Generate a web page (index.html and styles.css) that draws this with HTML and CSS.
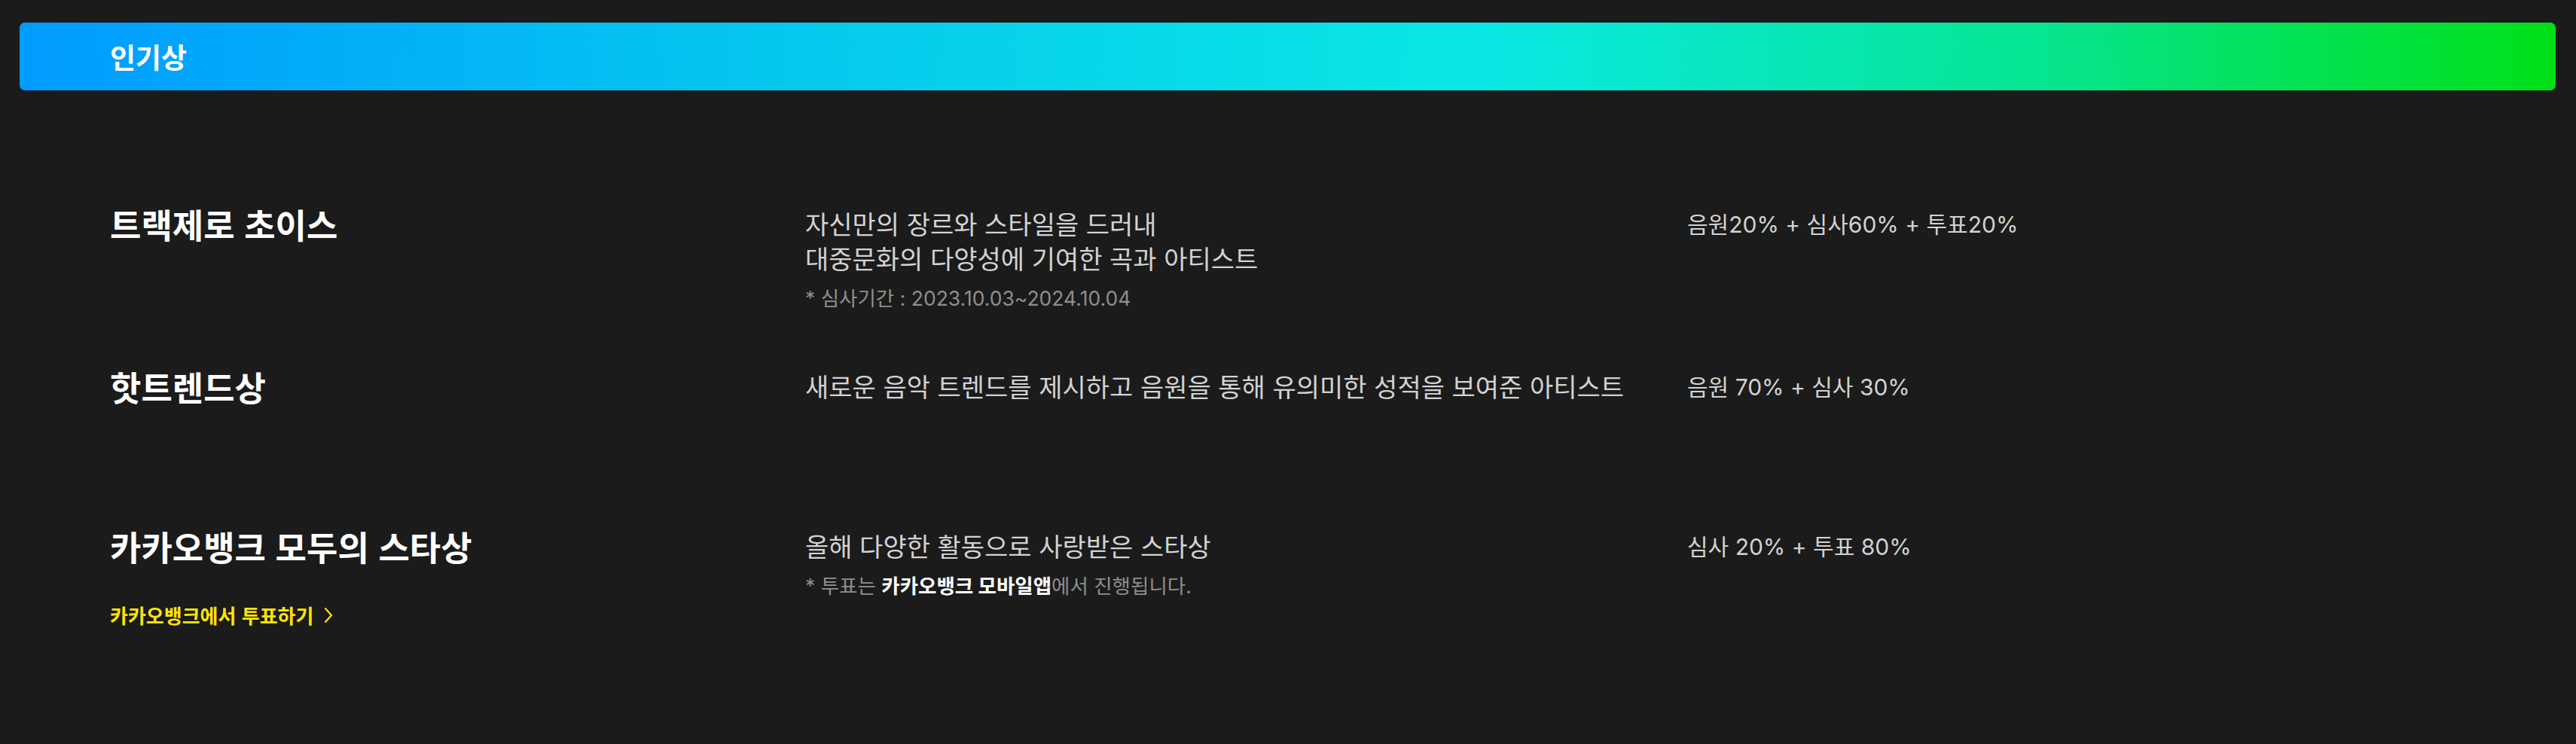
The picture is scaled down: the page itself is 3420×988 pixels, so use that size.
FILE: index.html
```html
<!DOCTYPE html>
<html lang="ko">
<head>
<meta charset="utf-8">
<title>인기상</title>
<link rel="stylesheet" href="styles.css">
</head>
<body>
<section class="award">
  <header class="award-banner">
    <h2 class="award-banner__title">인기상</h2>
  </header>
  <div class="award-list">
    <div class="award-row">
      <div class="award-name">
        <h3 class="award-name__title">트랙제로 초이스</h3>
      </div>
      <div class="award-desc">
        <p class="award-desc__text">자신만의 장르와 스타일을 드러내<br>대중문화의 다양성에 기여한 곡과 아티스트</p>
        <p class="award-desc__note">* 심사기간 : 2023.10.03~2024.10.04</p>
      </div>
      <div class="award-ratio">음원20% + 심사60% + 투표20%</div>
    </div>
    <div class="award-row">
      <div class="award-name">
        <h3 class="award-name__title">핫트렌드상</h3>
      </div>
      <div class="award-desc">
        <p class="award-desc__text">새로운 음악 트렌드를 제시하고 음원을 통해 유의미한 성적을 보여준 아티스트</p>
      </div>
      <div class="award-ratio">음원 70% + 심사 30%</div>
    </div>
    <div class="award-row">
      <div class="award-name">
        <h3 class="award-name__title">카카오뱅크 모두의 스타상</h3>
        <a class="award-name__link" href="#">카카오뱅크에서 투표하기
          <svg class="award-name__chevron" viewBox="0 0 12 22" width="12" height="22" aria-hidden="true"><path d="M1.5 1.5 L10 11 L1.5 20.5" fill="none" stroke="currentColor" stroke-width="2.2"/></svg>
        </a>
      </div>
      <div class="award-desc">
        <p class="award-desc__text">올해 다양한 활동으로 사랑받은 스타상</p>
        <p class="award-desc__note">* 투표는 <strong class="award-desc__strong">카카오뱅크 모바일앱</strong>에서 진행됩니다.</p>
      </div>
      <div class="award-ratio">심사 20% + 투표 80%</div>
    </div>
  </div>
</section>
</body>
</html>
```

FILE: styles.css
```css
* { box-sizing: border-box; }
html, body {
  margin: 0;
  padding: 0;
  background: #1b1b1b;
}
body {
  font-family: "Inter", "Noto Sans CJK KR", sans-serif;
  color: #d2d2d2;
}
p, h2, h3 { margin: 0; }

.award {
  padding: 30px 27px 0 26px;
  min-height: 988px;
}

.award-banner {
  height: 90px;
  border-radius: 7px;
  background: linear-gradient(90deg, #009bff 0%, #05c8ee 30%, #0ae8e4 58%, #06e58f 80%, #00df17 100%);
  display: flex;
  align-items: center;
  padding-left: 120px;
}
.award-banner__title {
  font-family: "Noto Sans CJK KR", sans-serif;
  font-size: 37px;
  font-weight: 700;
  color: #ffffff;
  line-height: 1;
}

.award-list {
  padding: 151px 0 0 120px;
  display: flex;
  flex-direction: column;
}

.award-row {
  display: grid;
  grid-template-columns: 923px 1171px 1fr;
  align-items: start;
  min-height: 212px;
}
.award-row:first-child {
  min-height: 216px;
}

.award-name {
  display: flex;
  flex-direction: column;
  align-items: flex-start;
}
.award-name__title {
  font-family: "Noto Sans CJK KR", sans-serif;
  font-size: 45px;
  font-weight: 700;
  line-height: 53px;
  color: #ffffff;
}
.award-name__link {
  margin-top: 48px;
  display: flex;
  align-items: center;
  gap: 14px;
  font-family: "Noto Sans CJK KR", sans-serif;
  font-size: 26px;
  font-weight: 700;
  line-height: 34px;
  color: #ffe500;
  text-decoration: none;
}
.award-name__chevron {
  display: block;
}

.award-desc {
  padding-top: 5px;
}
.award-desc__text {
  font-size: 34px;
  line-height: 46px;
  color: #d2d2d2;
}
.award-desc__note {
  margin-top: 10px;
  font-size: 26.5px;
  line-height: 36px;
  color: #8e8e8e;
}
.award-desc__strong {
  color: #ffffff;
  font-weight: 700;
}

.award-ratio {
  padding-top: 5px;
  font-size: 30px;
  line-height: 45px;
  color: #d2d2d2;
}
```
